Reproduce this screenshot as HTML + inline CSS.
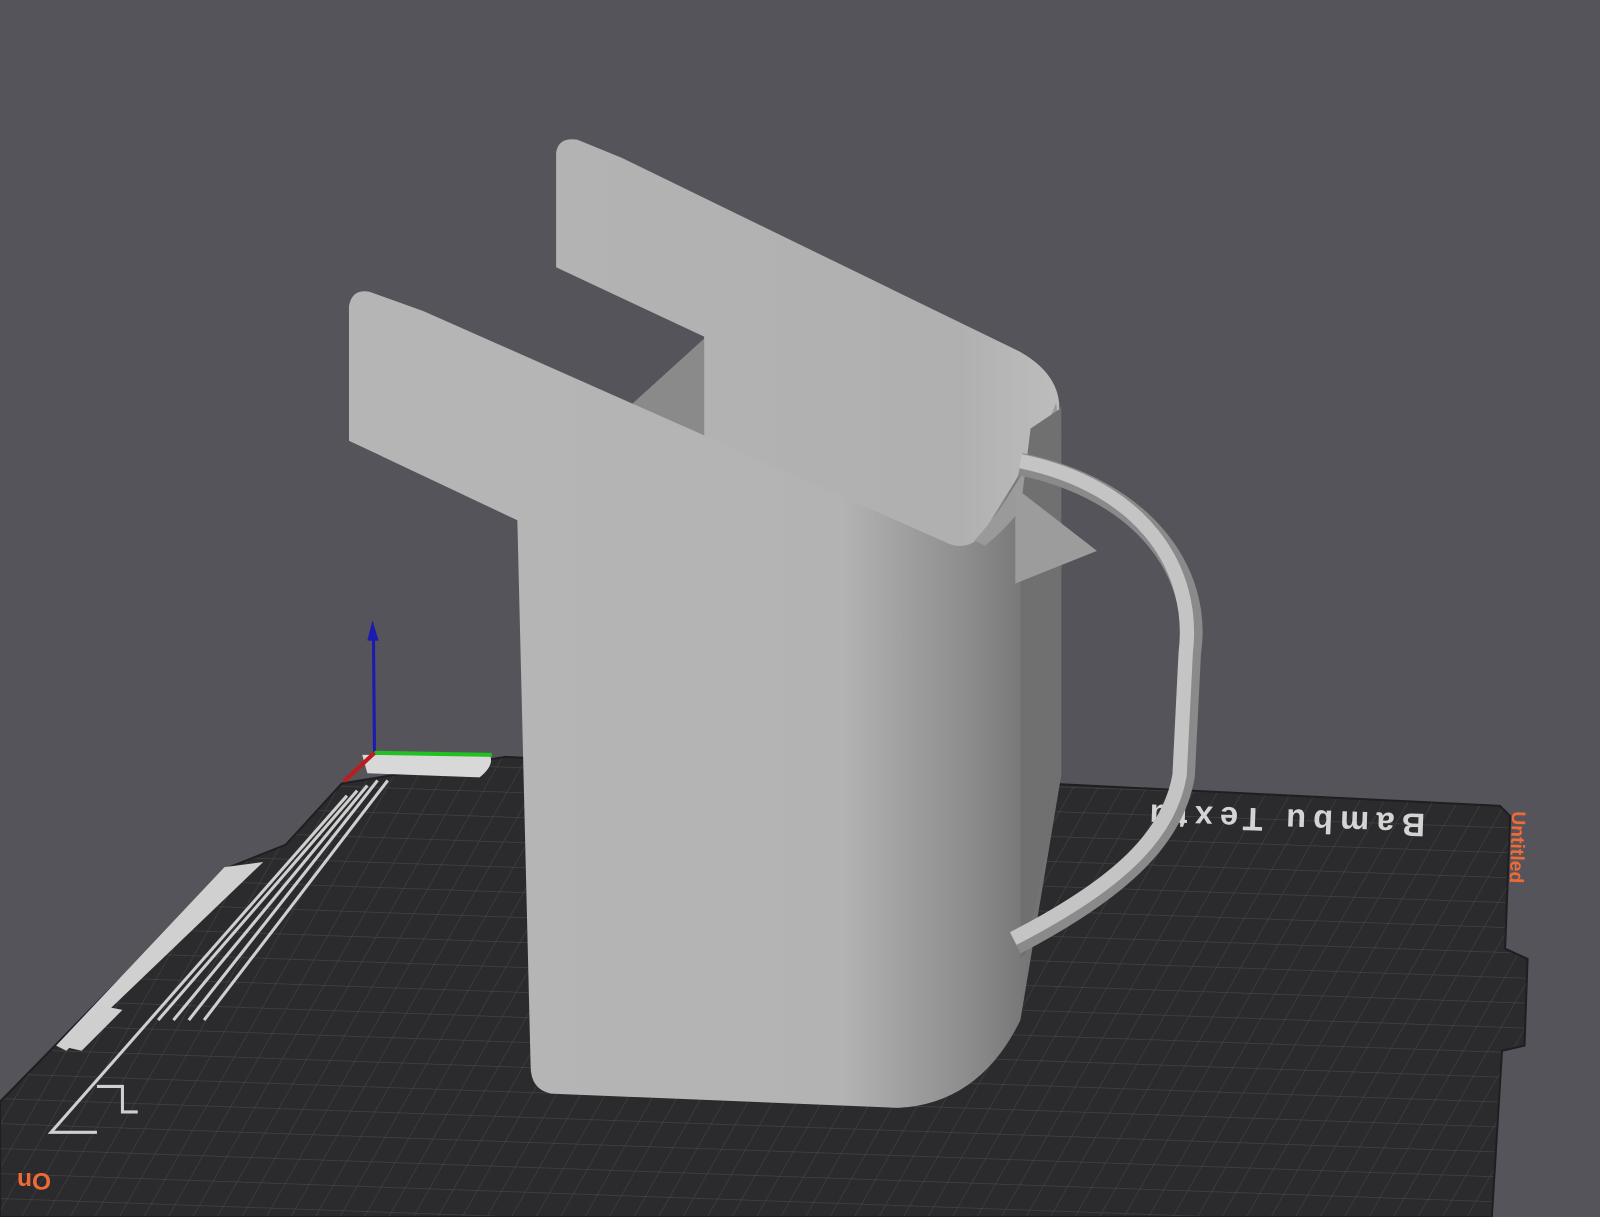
<!DOCTYPE html>
<html><head><meta charset="utf-8">
<style>
html,body{margin:0;padding:0;background:#55545a;overflow:hidden}
svg{display:block}
</style></head>
<body>
<svg width="1600" height="1217" viewBox="0 0 1568 1193" preserveAspectRatio="none" xmlns="http://www.w3.org/2000/svg">
<defs>
<pattern id="grid" width="24" height="24" patternUnits="userSpaceOnUse" patternTransform="skewX(-28) rotate(2)">
<rect width="24" height="24" fill="#2b2b2e"/>
<path d="M0 0H24M0 0V24" stroke="#444448" stroke-width="1.3"/>
</pattern>
<linearGradient id="body" x1="505" y1="0" x2="1040" y2="0" gradientUnits="userSpaceOnUse">
<stop offset="0" stop-color="#b5b5b5"/>
<stop offset="0.6" stop-color="#b3b3b3"/>
<stop offset="0.82" stop-color="#8e8e8e"/>
<stop offset="0.95" stop-color="#747474"/>
<stop offset="1" stop-color="#6e6e6e"/>
</linearGradient>
<linearGradient id="back" x1="545" y1="0" x2="1040" y2="0" gradientUnits="userSpaceOnUse">
<stop offset="0" stop-color="#b3b3b3"/>
<stop offset="0.8" stop-color="#b0b0b0"/>
<stop offset="1" stop-color="#bdbdbd"/>
</linearGradient>
</defs>
<rect width="1568" height="1193" fill="#55545a"/>
<path d="M495,742 L1470,790 L1480,800 L1475,930 L1497,940 L1494,1025 L1472,1030 L1462,1193 L0,1193 L0,1080 L225,850 L280,828 L335,768 Z" fill="url(#grid)" stroke="#1f1f22" stroke-width="2"/>
<g stroke="#cfcfcf" stroke-width="3" fill="none">
<path d="M380,765 L200,1000"/><path d="M370,765 L185,1000"/><path d="M360,770 L170,1000"/><path d="M350,775 L155,1000"/>
<path d="M340,780 L50,1110 L95,1110"/>
<path d="M95,1065 L120,1065 L120,1090 L135,1090"/>
</g>
<path d="M355,740 L480,740 Q485,750 470,762 L360,758 Z" fill="#d8d8d8"/>
<path d="M220,850 L258,845 L65,1030 L55,1025 Z" fill="#d0d0d0"/>
<path d="M95,985 L120,990 L80,1030 L58,1025 Z" fill="#cfcfcf"/>
<text x="0" y="0" transform="translate(1397,798) rotate(182)" font-family="Liberation Sans, sans-serif" font-size="32" font-weight="bold" fill="#d4d4d4" letter-spacing="7">Bambu Textu</text>
<text x="0" y="0" transform="translate(1482,795) rotate(92)" font-family="Liberation Sans, sans-serif" font-size="19" font-weight="bold" fill="#f06a35">Untitled</text>
<text x="0" y="0" transform="translate(50,1150) rotate(180)" font-family="Liberation Sans, sans-serif" font-size="24" font-weight="bold" fill="#f06a35">On</text>
<line x1="366" y1="625" x2="367" y2="738" stroke="#1b1bb0" stroke-width="3"/>
<path d="M360,628 L365,608 L371,628 Z" fill="#1b1bb0"/>
<line x1="367" y1="738" x2="482" y2="740" stroke="#22c022" stroke-width="4"/>
<line x1="367" y1="738" x2="337" y2="766" stroke="#c01b1b" stroke-width="4"/>
<!-- back fin -->
<path d="M545,150 Q547,134 566,137 L610,155 L1000,345 Q1035,365 1038,395 L1040,560 L690,560 L690,330 L545,262 Z" fill="url(#back)"/>
<path d="M615,400 L690,332 L690,445 Z" fill="#8a8a8a"/>
<!-- front fin + body -->
<path d="M342,300 Q345,283 362,286 L415,305 L930,533 Q948,540 962,525 L1040,398 L1040,760 L1000,1000 Q960,1082 880,1086 L540,1072 Q520,1068 520,1045 L507,510 L342,432 Z" fill="url(#body)"/>
<path d="M955,530 Q1000,480 1035,395 L1040,430 Q1010,500 965,535 Z" fill="#9a9a9a"/>
<path d="M1010,420 L1040,400 L1040,760 L1005,935 L1000,940 L1000,500 Z" fill="#707070"/>
<!-- bracket -->
<path d="M995,478 L1075,540 L995,572 Z" fill="#9c9c9c"/>
<!-- handle -->
<path d="M1000,455 C1120,480 1178,560 1166,640 L1160,760 C1150,820 1100,870 995,925" fill="none" stroke="#8a8a8a" stroke-width="22"/>
<path d="M1000,452 C1120,477 1172,557 1162,640 L1156,760 C1146,818 1098,866 993,920" fill="none" stroke="#c4c4c4" stroke-width="14"/>
</svg>
</body></html>
